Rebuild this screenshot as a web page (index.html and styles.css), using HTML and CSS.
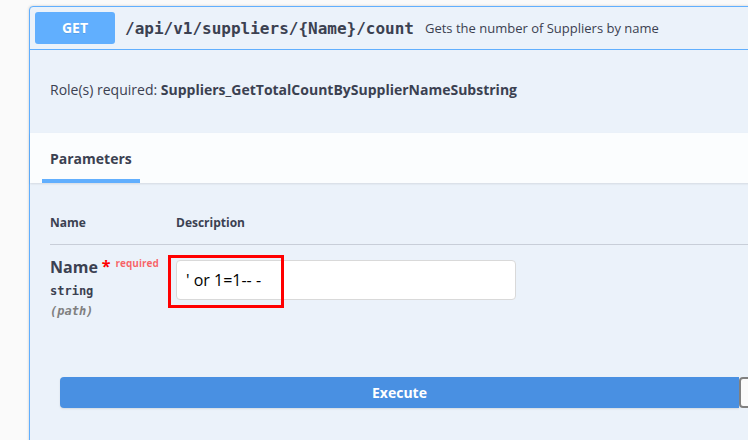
FILE: index.html
```html
<!DOCTYPE html>
<html lang="en">
<head>
<meta charset="utf-8">
<title>Swagger - Suppliers count</title>
<link rel="stylesheet" href="styles.css">
</head>
<body>
<div class="page">
  <div class="opblock">
    <div class="summary">
      <span class="method">GET</span>
      <span class="path">/api/v1/suppliers/{Name}/count</span>
      <span class="summary-desc">Gets the number of Suppliers by name</span>
    </div>
    <div class="roles">Role(s) required: <b>Suppliers_GetTotalCountBySupplierNameSubstring</b></div>
    <div class="section-header">
      <div class="tab-item">Parameters</div>
    </div>
    <div class="params">
      <div class="params-head">
        <div class="col-name">Name</div>
        <div class="col-desc">Description</div>
      </div>
      <div class="param-row">
        <div class="col-name">
          <div class="param-name">Name<span class="star">*</span><span class="req">required</span></div>
          <div class="param-type">string</div>
          <div class="param-in">(path)</div>
        </div>
        <div class="col-desc">
          <div class="input-wrap">
            <input class="param-input" type="text" value="' or 1=1-- -">
            <span class="highlight"></span>
          </div>
        </div>
      </div>
    </div>
    <div class="execute-wrapper">
      <button class="btn-execute">Execute</button>
      <button class="btn-clear"></button>
    </div>
  </div>
</div>
</body>
</html>
```

FILE: styles.css
```css
html, body {
  margin: 0;
  padding: 0;
}
body {
  background: #fafafa;
  width: 748px;
  height: 440px;
  overflow: hidden;
  font-family: "Open Sans", "Noto Sans", sans-serif;
  color: #3b4151;
}
.page {
  padding: 6px 0 0 29px;
}
.opblock {
  width: 1000px;
  height: 460px;
  border: 1px solid #61affe;
  border-radius: 4px;
  background: #ebf2fa;
  box-shadow: 0 0 3px rgba(0, 0, 0, 0.19);
}
.summary {
  display: flex;
  align-items: center;
  padding: 5px;
  border-bottom: 1px solid #61affe;
}
.method {
  width: 80px;
  height: 32px;
  line-height: 32px;
  text-align: center;
  background: #61affe;
  border-radius: 3px;
  color: #fff;
  font-weight: 700;
  font-size: 14px;
  text-shadow: 0 1px 0 rgba(0, 0, 0, 0.1);
}
.path {
  margin-left: 10px;
  font-family: "DejaVu Sans Mono", monospace;
  font-weight: 700;
  font-size: 16px;
  color: #3b4151;
}
.summary-desc {
  margin-left: 11px;
  font-size: 13px;
  color: #3b4151;
}
.roles {
  padding: 30px 20px 34px;
  font-size: 14px;
  line-height: 19px;
}
.roles b {
  font-weight: 700;
}
.section-header {
  display: flex;
  height: 50px;
  padding-left: 12px;
  background: rgba(255, 255, 255, 0.8);
  box-shadow: 0 1px 2px rgba(0, 0, 0, 0.1);
}
.tab-item {
  position: relative;
  display: flex;
  align-items: center;
  padding: 0 8px 0 8px;
  width: 82px;
  font-size: 14px;
  font-weight: 700;
}
.tab-item::after {
  content: "";
  position: absolute;
  left: 0;
  right: 0;
  bottom: 0;
  height: 4px;
  background: #61affe;
}
.params {
  padding: 0 0 0 20px;
}
.params-head {
  display: flex;
  padding: 32px 0 13px;
  border-bottom: 1px solid rgba(59, 65, 81, 0.2);
  font-size: 12px;
  font-weight: 700;
  line-height: 16px;
}
.col-name {
  width: 126px;
  flex: none;
}
.col-desc {
  flex: 1;
}
.param-row {
  display: flex;
}
.param-row .col-name {
  padding-top: 11px;
}
.param-name {
  font-size: 16px;
  font-weight: 700;
  line-height: 22px;
}
.star {
  color: red;
  margin-left: 4px;
  font-size: 16px;
  position: relative;
  top: -1px;
}
.req {
  font-size: 10px;
  color: rgba(255, 0, 0, 0.6);
  padding-left: 5px;
  position: relative;
  top: -6px;
}
.param-type {
  margin-top: 3px;
  font-family: "DejaVu Sans Mono", monospace;
  font-weight: 700;
  font-size: 12px;
  line-height: 16px;
}
.param-in {
  margin-top: 4px;
  font-family: "DejaVu Sans Mono", monospace;
  font-style: italic;
  font-weight: 600;
  font-size: 12px;
  line-height: 16px;
  color: gray;
}
.param-row .col-desc {
  padding-top: 15px;
}
.input-wrap {
  position: relative;
  width: 340px;
}
.param-input {
  box-sizing: border-box;
  width: 340px;
  height: 40px;
  margin: 0;
  padding: 0 9px;
  border: 1px solid #d9d9d9;
  border-radius: 4px;
  background: #fff;
  font-family: "Open Sans", sans-serif;
  font-size: 16px;
  color: #000;
  outline: none;
}
.highlight {
  position: absolute;
  left: -8px;
  top: -5px;
  width: 110px;
  height: 47px;
  border: 3px solid #ff0000;
  pointer-events: none;
}
.execute-wrapper {
  display: flex;
  padding: 58px 0 0 30px;
}
.btn-execute {
  width: 679px;
  height: 31px;
  margin: 0;
  padding: 0;
  border: none;
  border-radius: 4px 0 0 4px;
  background: #4990e2;
  color: #fff;
  font-family: "Open Sans", sans-serif;
  font-weight: 700;
  font-size: 14px;
  box-shadow: 0 1px 2px rgba(0, 0, 0, 0.1);
}
.btn-clear {
  width: 100px;
  height: 31px;
  margin: 0;
  padding: 0;
  border: 2px solid #808080;
  border-radius: 4px 0 0 4px;
  background: #fafafa;
}
```
